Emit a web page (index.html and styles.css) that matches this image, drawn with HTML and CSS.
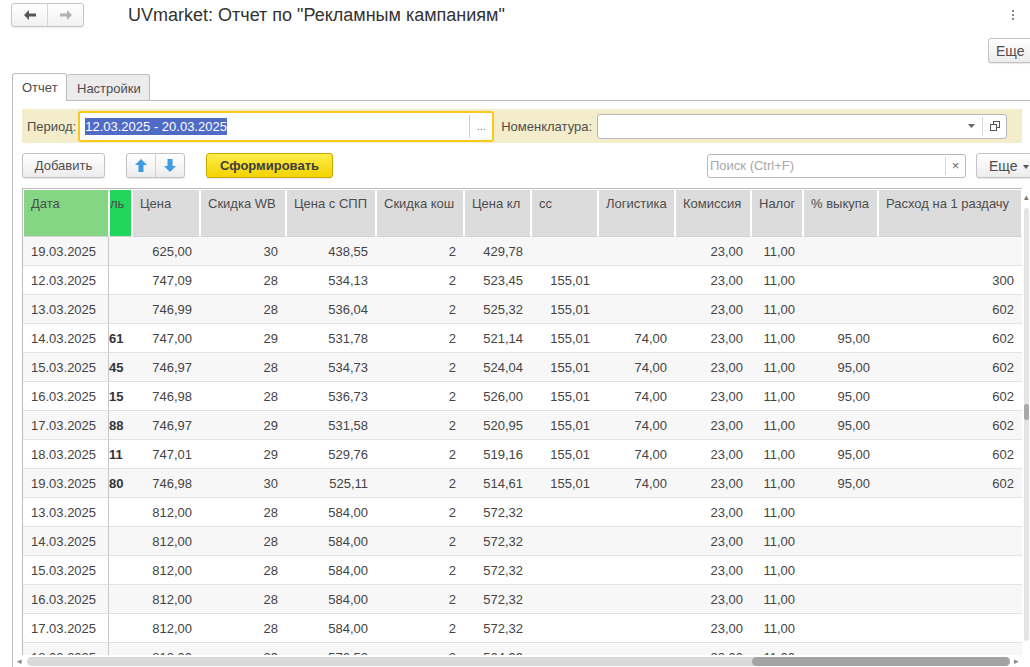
FILE: index.html
```html
<!DOCTYPE html>
<html lang="ru">
<head>
    <meta charset="UTF-8">
    <meta name="viewport" content="width=device-width, initial-scale=1.0">
    <title>UVmarket: Отчет по "Рекламным кампаниям"</title>
    <link rel="stylesheet" href="styles.css">
</head>
<body>
    <div class="topbar">
        <div class="nav">
            <div class="nav-btn">
                <svg width="12" height="10" viewBox="0 0 12 10"><polygon points="0,5 5,0 5,3.5 12,3.5 12,6.5 5,6.5 5,10" fill="#555"/></svg>
            </div>
            <div class="nav-btn">
                <svg width="12" height="10" viewBox="0 0 12 10"><polygon points="12,5 7,0 7,3.5 0,3.5 0,6.5 7,6.5 7,10" fill="#b0b0b0"/></svg>
            </div>
        </div>
        <div class="title">UVmarket: Отчет по "Рекламным кампаниям"</div>
        <div class="dots"><span></span><span></span><span></span></div>
    </div>

    <div class="cmdbar">
        <button class="btn more-top">Еще</button>
    </div>

    <div class="tabs">
        <div class="tab tab-active">Отчет</div>
        <div class="tab tab-plain">Настройки</div>
    </div>

    <div class="panel">
        <div class="filters">
            <span class="label">Период:</span>
            <div class="period-field">
                <div class="period-text"><span class="sel">12.03.2025 - 20.03.2025</span></div>
                <div class="period-btn">...</div>
            </div>
            <span class="label nom-label">Номенклатура:</span>
            <div class="nom-field">
                <div class="nom-text"></div>
                <div class="nom-drop">
                    <svg width="7" height="4" viewBox="0 0 7 4"><polygon points="0,0 7,0 3.5,4" fill="#666"/></svg>
                </div>
                <div class="nom-open">
                    <svg width="10" height="10" viewBox="0 0 10 10">
                        <rect x="3.5" y="0.5" width="6" height="6" fill="none" stroke="#555"/>
                        <rect x="0.5" y="3.5" width="6" height="6" fill="#fff" stroke="#555"/>
                    </svg>
                </div>
            </div>
        </div>

        <div class="toolbar">
            <button class="btn btn-add">Добавить</button>
            <div class="updown">
                <div class="ud-btn">
                    <svg width="12" height="13" viewBox="0 0 12 13"><polygon points="6,0 12,6 8.5,6 8.5,13 3.5,13 3.5,6 0,6" fill="#3d9be2"/></svg>
                </div>
                <div class="ud-btn">
                    <svg width="12" height="13" viewBox="0 0 12 13"><polygon points="6,13 12,7 8.5,7 8.5,0 3.5,0 3.5,7 0,7" fill="#3d9be2"/></svg>
                </div>
            </div>
            <button class="btn btn-make">Сформировать</button>
            <div class="search">
                <div class="search-text">Поиск (Ctrl+F)</div>
                <div class="search-clear">×</div>
            </div>
            <div class="more-btn">
                <span>Еще</span>
                <span class="caret"></span>
            </div>
        </div>

        <div class="grid">
            <div class="grid-body">
                <div class="table-wrap">
                    <table class="grid-table">
                        <colgroup>
                            <col style="width:86px"><col style="width:23px"><col style="width:68px">
                            <col style="width:86px"><col style="width:90px"><col style="width:88px">
                            <col style="width:67px"><col style="width:67px"><col style="width:77px">
                            <col style="width:76px"><col style="width:52px"><col style="width:75px">
                            <col style="width:144px">
                        </colgroup>
                        <thead>
                            <tr>
                                <th class="h-date">Дата</th>
                                <th class="h-sold">ль</th>
                                <th>Цена</th>
                                <th>Скидка WB</th>
                                <th>Цена с СПП</th>
                                <th>Скидка кош</th>
                                <th>Цена кл</th>
                                <th>сс</th>
                                <th>Логистика</th>
                                <th>Комиссия</th>
                                <th>Налог</th>
                                <th>% выкупа</th>
                                <th>Расход на 1 раздачу</th>
                            </tr>
                        </thead>
                        <tbody id="rows"></tbody>
                    </table>
                </div>
                <div class="vscroll">
                    <div class="v-arrow">▴</div>
                    <div class="v-track"><div class="v-thumb"></div></div>
                </div>
            </div>
            <div class="hscroll">
                <div class="h-arrow">◂</div>
                <div class="h-track"><div class="h-thumb"></div></div>
                <div class="h-arrow">▸</div>
            </div>
        </div>
    </div>

    <script>
        // date, sold, price, wb, spp, cart, clientPrice, cost, logistics, commission, tax, buyout, spend
        const data = [
            ['19.03.2025', '', '625,00', '30', '438,55', '2', '429,78', '', '', '23,00', '11,00', '', ''],
            ['12.03.2025', '', '747,09', '28', '534,13', '2', '523,45', '155,01', '', '23,00', '11,00', '', '300'],
            ['13.03.2025', '', '746,99', '28', '536,04', '2', '525,32', '155,01', '', '23,00', '11,00', '', '602'],
            ['14.03.2025', '61', '747,00', '29', '531,78', '2', '521,14', '155,01', '74,00', '23,00', '11,00', '95,00', '602'],
            ['15.03.2025', '45', '746,97', '28', '534,73', '2', '524,04', '155,01', '74,00', '23,00', '11,00', '95,00', '602'],
            ['16.03.2025', '15', '746,98', '28', '536,73', '2', '526,00', '155,01', '74,00', '23,00', '11,00', '95,00', '602'],
            ['17.03.2025', '88', '746,97', '29', '531,58', '2', '520,95', '155,01', '74,00', '23,00', '11,00', '95,00', '602'],
            ['18.03.2025', '11', '747,01', '29', '529,76', '2', '519,16', '155,01', '74,00', '23,00', '11,00', '95,00', '602'],
            ['19.03.2025', '80', '746,98', '30', '525,11', '2', '514,61', '155,01', '74,00', '23,00', '11,00', '95,00', '602'],
            ['13.03.2025', '', '812,00', '28', '584,00', '2', '572,32', '', '', '23,00', '11,00', '', ''],
            ['14.03.2025', '', '812,00', '28', '584,00', '2', '572,32', '', '', '23,00', '11,00', '', ''],
            ['15.03.2025', '', '812,00', '28', '584,00', '2', '572,32', '', '', '23,00', '11,00', '', ''],
            ['16.03.2025', '', '812,00', '28', '584,00', '2', '572,32', '', '', '23,00', '11,00', '', ''],
            ['17.03.2025', '', '812,00', '28', '584,00', '2', '572,32', '', '', '23,00', '11,00', '', ''],
            ['18.03.2025', '', '812,00', '29', '576,52', '2', '564,99', '', '', '23,00', '11,00', '', '']
        ];

        const tbody = document.getElementById('rows');
        data.forEach(function (row) {
            const tr = document.createElement('tr');
            row.forEach(function (value, i) {
                const td = document.createElement('td');
                td.textContent = value;
                if (i === 0) td.className = 'c-date';
                else if (i === 1) td.className = 'c-sold';
                else td.className = 'c-num';
                tr.appendChild(td);
            });
            tbody.appendChild(tr);
        });
    </script>
</body>
</html>
```

FILE: styles.css
```css
* {
    box-sizing: border-box;
}

html, body {
    margin: 0;
}

body {
    font-family: "Liberation Sans", Arial, sans-serif;
    font-size: 13px;
    color: #4d4d4d;
    background-color: #fff;
    width: 1030px;
    height: 667px;
    overflow: hidden;
}

/* top line: navigation and title */
.topbar {
    display: flex;
    align-items: center;
    height: 30px;
    padding: 3px 0 3px 11px;
}

.nav {
    display: flex;
    width: 73px;
    height: 24px;
    border: 1px solid #c6c6c6;
    border-radius: 3px;
    background: linear-gradient(#fff, #f1f1f1);
    box-shadow: 0 1px 1px rgba(0, 0, 0, 0.08);
}

.nav-btn {
    flex: 1;
    display: flex;
    align-items: center;
    justify-content: center;
}

.nav-btn + .nav-btn {
    border-left: 1px solid #d6d6d6;
}

.title {
    margin-left: 44px;
    font-size: 18px;
    color: #333;
}

.dots {
    margin-left: auto;
    margin-right: 16px;
    display: flex;
    flex-direction: column;
    gap: 2px;
}

.dots span {
    width: 2px;
    height: 2px;
    background-color: #888;
}

/* buttons */
.btn {
    height: 25px;
    border: 1px solid #c3c3c3;
    border-radius: 3px;
    background: linear-gradient(#fff, #ececec);
    box-shadow: 0 1px 1px rgba(0, 0, 0, 0.1);
    padding: 0 12px;
    font: inherit;
    color: #4d4d4d;
    display: flex;
    align-items: center;
    justify-content: center;
}

.cmdbar {
    display: flex;
    justify-content: flex-end;
    margin-top: 8px;
    height: 25px;
}

.more-top {
    width: 52px;
    margin-right: -10px;
    justify-content: flex-start;
    padding-left: 7px;
    font-size: 14px;
}

/* tabs */
.tabs {
    display: flex;
    margin: 10px 0 0 12px;
    height: 27px;
    position: relative;
    z-index: 1;
}

.tab {
    border: 1px solid #bdbdbd;
    border-bottom: none;
    border-radius: 3px 3px 0 0;
    padding: 6px 0 0 9px;
    line-height: 16px;
}

.tab-active {
    width: 55px;
    height: 28px;
    background-color: #fff;
}

.tab-plain {
    width: 83px;
    height: 26px;
    margin-top: 1px;
    border-left: none;
    padding-left: 10px;
    background-color: #ececec;
}

.panel {
    margin-left: 12px;
    border-top: 1px solid #bdbdbd;
    border-left: 1px solid #bdbdbd;
    padding: 8px 8px 0 9px;
    height: 567px;
}

/* filter line */
.filters {
    display: flex;
    align-items: center;
    height: 34px;
    background-color: #f3edcb;
    padding-left: 5px;
}

.label {
    margin-right: 2px;
}

.period-field {
    display: flex;
    width: 416px;
    height: 31px;
    border: 2px solid #f8c81c;
    border-radius: 3px;
    background-color: #fff;
}

.period-text {
    flex: 1;
    display: flex;
    align-items: center;
    padding-left: 5px;
}

.sel {
    background-color: #4f6bc6;
    color: #fff;
    padding: 1px 0;
}

.period-btn {
    width: 23px;
    margin: 2px 0;
    border-left: 1px solid #d0d0d0;
    display: flex;
    align-items: center;
    justify-content: center;
    font-size: 11px;
    color: #777;
}

.nom-label {
    margin-left: 7px;
    margin-right: 5px;
}

.nom-field {
    display: flex;
    width: 410px;
    height: 25px;
    border: 1px solid #b5b5b5;
    border-radius: 3px;
    background-color: #fff;
}

.nom-text {
    flex: 1;
}

.nom-drop {
    width: 22px;
    display: flex;
    align-items: center;
    justify-content: center;
}

.nom-open {
    width: 24px;
    margin: 2px 0;
    border-left: 1px solid #d6d6d6;
    display: flex;
    align-items: center;
    justify-content: center;
}

/* command line above the table */
.toolbar {
    display: flex;
    align-items: center;
    margin-top: 10px;
    margin-right: -10px;
    height: 25px;
}

.btn-add {
    width: 83px;
}

.updown {
    display: flex;
    width: 59px;
    height: 25px;
    margin-left: 21px;
    border: 1px solid #c3c3c3;
    border-radius: 3px;
    background: linear-gradient(#fff, #ececec);
    box-shadow: 0 1px 1px rgba(0, 0, 0, 0.1);
}

.ud-btn {
    flex: 1;
    display: flex;
    align-items: center;
    justify-content: center;
}

.ud-btn + .ud-btn {
    border-left: 1px solid #d0d0d0;
}

.btn-make {
    width: 127px;
    margin-left: 21px;
    border-color: #c9a900;
    background: linear-gradient(#ffec4a, #f3d300);
    font-weight: bold;
    color: #3d3d3d;
}

.search {
    display: flex;
    margin-left: auto;
    width: 259px;
    height: 24px;
    border: 1px solid #b8b8b8;
    border-radius: 3px;
    background-color: #fff;
}

.search-text {
    flex: 1;
    display: flex;
    align-items: center;
    padding-left: 2px;
    color: #a8a8a8;
}

.search-clear {
    width: 20px;
    margin: 2px 0;
    border-left: 1px solid #d6d6d6;
    display: flex;
    align-items: center;
    justify-content: center;
    color: #666;
}

.more-btn {
    display: flex;
    align-items: center;
    gap: 5px;
    width: 56px;
    height: 25px;
    margin-left: 10px;
    padding-left: 12px;
    flex-shrink: 0;
    border: 1px solid #c3c3c3;
    border-radius: 3px;
    background: linear-gradient(#fff, #ececec);
    box-shadow: 0 1px 1px rgba(0, 0, 0, 0.1);
    font-size: 14px;
}

.caret {
    width: 0;
    height: 0;
    margin-top: 2px;
    border-left: 3px solid transparent;
    border-right: 3px solid transparent;
    border-top: 4px solid #555;
}

/* table */
.grid {
    margin-top: 10px;
    height: 479px;
    display: flex;
    flex-direction: column;
}

.grid-body {
    display: flex;
    height: 467px;
    margin-right: -8px;
}

.table-wrap {
    width: 1000px;
    flex-shrink: 0;
    overflow: hidden;
    border-left: 1px solid #bdbdbd;
    border-top: 1px solid #bdbdbd;
}

.grid-table {
    border-collapse: separate;
    border-spacing: 0;
    table-layout: fixed;
    width: 999px;
}

.grid-table thead tr {
    height: 48px;
}

.grid-table th {
    background-color: #dcdcdc;
    border: 1px solid #fff;
    border-bottom: 1px solid #d2d2d2;
    padding: 6px 0 0 7px;
    vertical-align: top;
    text-align: left;
    font-weight: normal;
    line-height: 16px;
    white-space: nowrap;
    overflow: hidden;
}

.grid-table th.h-date {
    background-color: #84d684;
}

.grid-table th.h-sold {
    background-color: #22d65b;
    padding-left: 0;
}

.grid-table tbody tr {
    height: 29px;
}

.grid-table tbody tr:nth-child(odd) {
    background-color: #f7f7f7;
}

.grid-table td {
    border-bottom: 1px solid #e2e2e2;
    padding: 0 8px 0 0;
    white-space: nowrap;
    overflow: hidden;
    color: #444;
}

.grid-table td.c-date {
    padding-left: 8px;
    border-right: 1px solid #c8c8c8;
}

.grid-table td.c-sold {
    padding: 0;
    font-weight: bold;
    color: #333;
}

.grid-table td.c-num {
    text-align: right;
}

.vscroll {
    width: 8px;
    flex-shrink: 0;
    display: flex;
    flex-direction: column;
    align-items: center;
}

.v-arrow {
    height: 20px;
    padding-top: 4px;
    font-size: 9px;
    color: #777;
}

.v-track {
    width: 5px;
    flex: 1;
    margin-bottom: 14px;
    border-radius: 3px;
    background-color: #e4e4e4;
}

.v-thumb {
    width: 5px;
    height: 16px;
    margin-top: 196px;
    border-radius: 3px;
    background-color: #a8a8a8;
}

.hscroll {
    display: flex;
    align-items: center;
    height: 12px;
    margin-left: -8px;
}

.h-arrow {
    width: 14px;
    font-size: 9px;
    color: #888;
    text-align: center;
}

.h-track {
    width: 983px;
    height: 9px;
    margin: 0 2px;
    border-radius: 5px;
    background-color: #dadada;
}

.h-thumb {
    width: 258px;
    height: 9px;
    margin-left: 725px;
    border-radius: 5px;
    background-color: #a3a3a3;
}
```
